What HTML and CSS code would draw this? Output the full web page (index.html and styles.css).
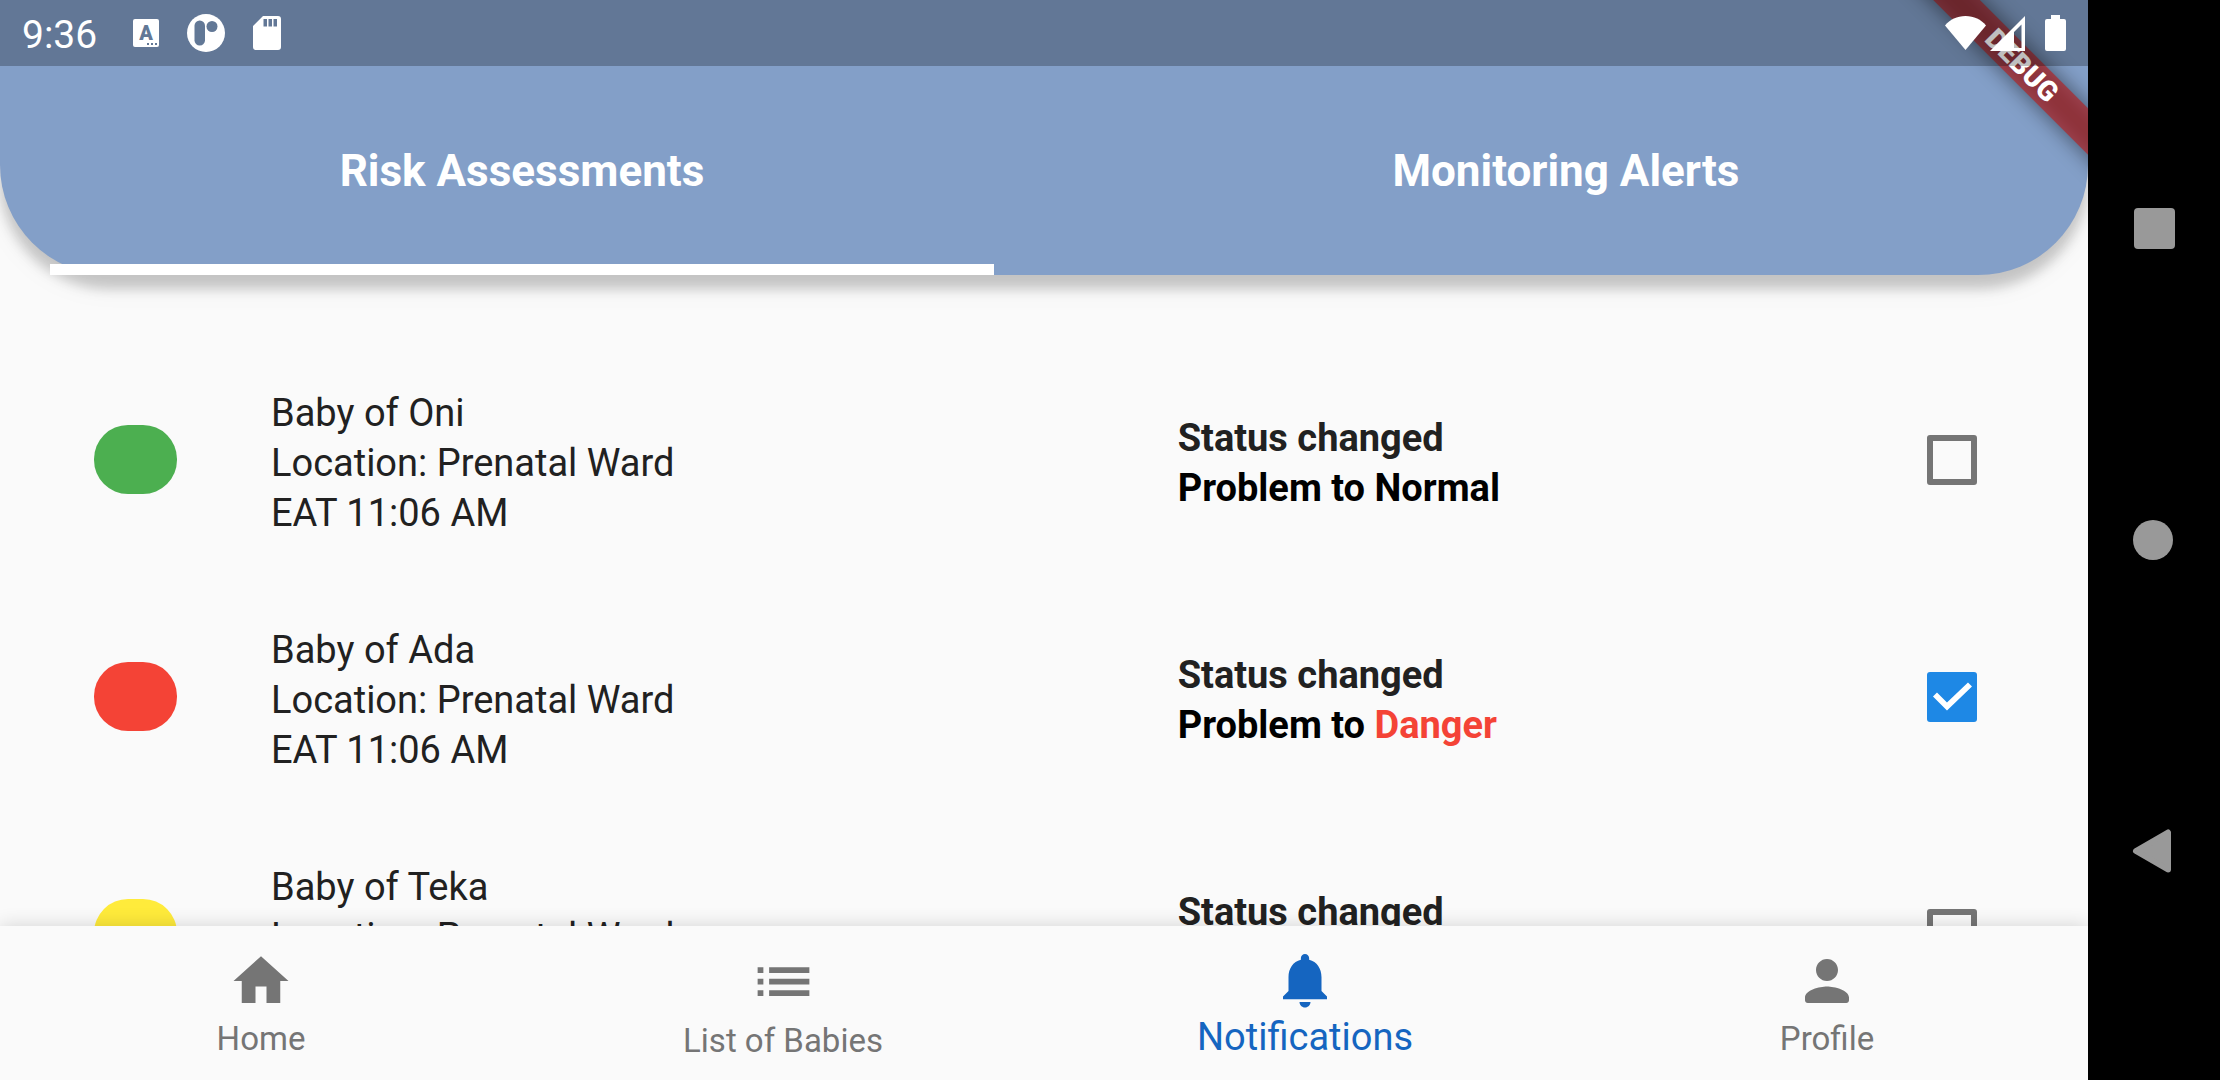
FILE: index.html
```html
<!DOCTYPE html>
<html lang="en">
<head>
<meta charset="utf-8">
<meta name="viewport" content="width=device-width, initial-scale=1">
<title>Notifications</title>
<link rel="stylesheet" href="styles.css">
</head>
<body>
<div class="app">
  <div class="banner-clip"><span class="banner">DEBUG</span></div>

  <div class="status-bar">
    <div class="status-group status-left">
      <time class="clock">9:36</time>
      <svg width="26" height="28" viewBox="0 0 26 28" aria-hidden="true">
        <rect width="26" height="28" rx="2" fill="#fff"/>
        <text class="badge-letter" x="13" y="21" text-anchor="middle">A</text>
        <path d="M14 24h2v2h-2zM18 24h2v2h-2zM22 24h2v2h-2z" fill="#627896"/>
      </svg>
      <svg width="38" height="38" viewBox="0 0 38 38" aria-hidden="true">
        <circle cx="19" cy="19" r="19" fill="#fff"/>
        <rect x="7.5" y="6.500" width="10.500" height="25" rx="5.200" fill="#627896"/>
        <circle cx="25" cy="12.500" r="5.500" fill="#627896"/>
      </svg>
      <svg width="28" height="34" viewBox="0 0 28 34" aria-hidden="true">
        <path fill="#fff" fill-rule="evenodd" d="M10 0h15a3 3 0 0 1 3 3v28a3 3 0 0 1-3 3H3a3 3 0 0 1-3-3V10zM10.500 3v7.500h3.500V3zM15.500 3v7.500h3.500V3zM20.500 3v7.500H24V3z"/>
      </svg>
    </div>
    <div class="status-group status-right">
      <svg width="41" height="34" viewBox="0 0 41 34" aria-hidden="true">
        <path fill="#fff" d="M0 9.500C5 3.500 12 0 20.500 0S36 3.500 41 9.500L20.500 34z"/>
      </svg>
      <svg class="signal" width="35" height="35" viewBox="0 0 35 35" aria-hidden="true">
        <path fill="#fff" fill-rule="evenodd" d="M0 35 35 0v35zM24 16v16h7.500V8.500z"/>
      </svg>
      <svg width="21" height="36" viewBox="0 0 21 36" aria-hidden="true">
        <path fill="#fff" d="M6 0h9v4h4a2 2 0 0 1 2 2v28a2 2 0 0 1-2 2H2a2 2 0 0 1-2-2V6a2 2 0 0 1 2-2h4z"/>
      </svg>
    </div>
  </div>

  <header class="app-header" role="tablist">
    <button class="tab tab-active" type="button" role="tab" aria-selected="true">Risk Assessments</button>
    <button class="tab" type="button" role="tab" aria-selected="false">Monitoring Alerts</button>
  </header>

  <main class="content">
    <ul class="alerts">
      <li class="alert">
        <span class="dot dot-normal"></span>
        <p class="details">Baby of Oni<br>Location: Prenatal Ward<br>EAT 11:06 AM</p>
        <p class="change"><span class="change-title">Status changed</span><br>Problem to Normal</p>
        <input class="check" type="checkbox" aria-label="Baby of Oni">
      </li>
      <li class="alert">
        <span class="dot dot-danger"></span>
        <p class="details">Baby of Ada<br>Location: Prenatal Ward<br>EAT 11:06 AM</p>
        <p class="change"><span class="change-title">Status changed</span><br>Problem to <span class="danger">Danger</span></p>
        <input class="check" type="checkbox" aria-label="Baby of Ada" checked>
      </li>
      <li class="alert">
        <span class="dot dot-problem"></span>
        <p class="details">Baby of Teka<br>Location: Prenatal Ward<br>EAT 11:06 AM</p>
        <p class="change"><span class="change-title">Status changed</span><br>Normal to Problem</p>
        <input class="check" type="checkbox" aria-label="Baby of Teka">
      </li>
    </ul>
  </main>

  <nav class="bottom-nav">
    <a class="nav-item" href="#home">
      <svg class="nav-icon" viewBox="0 0 24 24" aria-hidden="true"><path d="M10 20v-6h4v6h5v-8h3L12 3 2 12h3v8z"/></svg>
      Home
    </a>
    <a class="nav-item" href="#babies">
      <svg class="nav-icon nav-icon-large" viewBox="0 0 24 24" aria-hidden="true"><path d="M3 13h2v-2H3v2zm0 4h2v-2H3v2zm0-8h2V7H3v2zm4 4h14v-2H7v2zm0 4h14v-2H7v2zM7 7v2h14V7H7z"/></svg>
      List of Babies
    </a>
    <a class="nav-item nav-item-active" href="#notifications" aria-current="page">
      <svg class="nav-icon" viewBox="0 0 24 24" aria-hidden="true"><path d="M12 22c1.100 0 2-.9 2-2h-4c0 1.100.89 2 2 2zm6-6v-5c0-3.070-1.640-5.640-4.500-6.320V4c0-.83-.67-1.500-1.500-1.500s-1.500.67-1.500 1.500v.68C7.630 5.360 6 7.920 6 11v5l-2 2v1h16v-1l-2-2z"/></svg>
      Notifications
    </a>
    <a class="nav-item" href="#profile">
      <svg class="nav-icon" viewBox="0 0 24 24" aria-hidden="true"><path d="M12 12c2.210 0 4-1.790 4-4s-1.790-4-4-4-4 1.790-4 4 1.790 4 4 4zm0 2c-2.670 0-8 1.340-8 4v1c0 .55.45 1 1 1h14c.55 0 1-.45 1-1v-1c0-2.660-5.330-4-8-4z"/></svg>
      Profile
    </a>
  </nav>
</div>

<div class="system-nav">
  <button class="system-button" type="button" aria-label="Overview">
    <svg width="60" height="60" viewBox="-30 -30 60 60"><rect x="-20" y="-21" width="41" height="41" rx="4"/></svg>
  </button>
  <button class="system-button" type="button" aria-label="Home">
    <svg width="60" height="60" viewBox="-30 -30 60 60"><circle cx="-1" cy="0" r="20"/></svg>
  </button>
  <button class="system-button" type="button" aria-label="Back">
    <svg width="60" height="60" viewBox="-30 -30 60 60"><path d="M-18 0 14-18.500v37z" stroke="#999" stroke-width="6" stroke-linejoin="round"/></svg>
  </button>
</div>
</body>
</html>
```

FILE: styles.css
```css
* {
  box-sizing: border-box;
}

body {
  display: flex;
  height: 100vh;
  margin: 0;
  background: #000;
  color: #212121;
  font-family: Roboto, "Liberation Sans", sans-serif;
  font-size: 38px;
  line-height: 50px;
}

button {
  padding: 0;
  border: 0;
  background: none;
  color: inherit;
  font: inherit;
}

.app {
  position: relative;
  display: flex;
  flex: 1;
  flex-direction: column;
  min-width: 0;
  overflow: hidden;
  background: #fafafa;
}

/* System status bar, laid over the header and the banner */
.status-bar {
  position: absolute;
  inset: 0 0 auto;
  z-index: 3;
  display: flex;
  justify-content: space-between;
  height: 66px;
  padding: 0 22px;
  background: rgba(0, 0, 0, 0.25);
  color: #fff;
}

.status-group {
  display: flex;
  align-items: center;
}

.status-left {
  gap: 28px;
}

.clock {
  margin-right: 8px;
  padding-top: 4px;
  font-size: 39px;
}

.badge-letter {
  fill: #627896;
  font-size: 20px;
  font-weight: 900;
}

.signal {
  margin: 0 20px 0 4px;
}

/* Corner banner */
.banner-clip {
  position: absolute;
  top: 0;
  right: 0;
  z-index: 2;
  width: 220px;
  height: 220px;
  overflow: hidden;
  pointer-events: none;
}

.banner {
  position: absolute;
  top: 49px;
  right: -94px;
  width: 320px;
  height: 33px;
  color: #fff;
  font-size: 28px;
  font-weight: 900;
  line-height: 33px;
  text-align: center;
  transform: rotate(45deg);
}

.banner::before,
.banner::after {
  position: absolute;
  inset: 0;
  content: "";
}

.banner::before {
  z-index: -2;
  background: rgba(0, 0, 0, 0.5);
  filter: blur(11px);
}

.banner::after {
  z-index: -1;
  background: rgba(183, 28, 28, 0.63);
}

/* Header with tabs */
.app-header {
  position: relative;
  z-index: 1;
  display: flex;
  flex: none;
  height: 275px;
  padding-top: 66px;
  border-radius: 0 0 110px 110px;
  background: #839fc8;
  box-shadow: 0 14px 12px rgba(0, 0, 0, 0.18), 0 11px 30px rgba(0, 0, 0, 0.06);
}

.tab {
  flex: 1;
  margin: 0 50px;
  color: #fff;
  font-size: 44px;
  font-weight: 700;
}

.tab-active {
  box-shadow: inset 0 -11px #fff;
}

/* Alerts */
.content {
  flex: 1;
  min-height: 0;
  padding-top: 66px;
  overflow: hidden;
}

.alerts {
  margin: 0;
  padding: 0;
  list-style: none;
}

.alert {
  display: grid;
  grid-template-columns: 83px 31fr 25fr 50px;
  column-gap: 94px;
  align-items: center;
  min-height: 237px;
  padding: 0 111px 0 94px;
}

.dot {
  height: 69px;
  border-radius: 34px;
}

.dot-normal {
  background: #4caf50;
}

.dot-danger {
  background: #f44336;
}

.dot-problem {
  background: #ffeb3b;
}

.details,
.change {
  margin: 0;
  padding-top: 6px;
}

.change {
  color: #000;
  font-weight: 700;
}

.change-title {
  color: #212121;
}

.danger {
  color: #f44336;
}

.check {
  width: 50px;
  height: 50px;
  margin: 0;
  border: 6px solid #757575;
  border-radius: 3px;
  appearance: none;
}

.check:checked {
  border: 0;
  background: #1e88e5;
}

.check:checked::before {
  display: block;
  width: 50px;
  height: 50px;
  background: #fff;
  clip-path: polygon(6px 25px, 10px 21px, 20px 31px, 41px 11px, 45px 15px, 20px 39px);
  content: "";
}

/* Bottom navigation */
.bottom-nav {
  position: relative;
  z-index: 1;
  display: flex;
  flex: none;
  height: 154px;
  background: #fafafa;
  box-shadow: 0 0 18px rgba(0, 0, 0, 0.16);
}

.nav-item {
  display: flex;
  flex: 1;
  flex-direction: column;
  gap: 5px;
  align-items: center;
  justify-content: center;
  color: #757575;
  font-size: 33px;
  line-height: 39px;
  text-decoration: none;
}

.nav-item-active {
  gap: 2px;
  color: #1565c0;
  font-size: 38px;
  line-height: 44px;
}

.nav-icon {
  width: 66px;
  height: 66px;
  fill: currentColor;
}

.nav-icon-large {
  width: 69px;
  height: 69px;
}

/* System navigation rail */
.system-nav {
  display: flex;
  flex: none;
  flex-direction: column;
  justify-content: center;
  width: 132px;
}

.system-button {
  display: grid;
  height: 311px;
  place-items: center;
  fill: #999;
}
```
